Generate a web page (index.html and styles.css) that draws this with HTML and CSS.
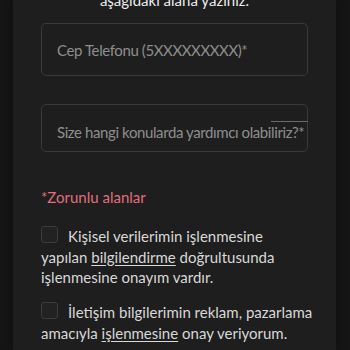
FILE: index.html
```html
<!DOCTYPE html>
<html lang="tr">
<head>
<meta charset="utf-8">
<link rel="stylesheet" href="styles.css">
</head>
<body>
<div class="panel">
  <p class="intro">aşağıdaki alana yazınız.</p>
  <div class="field field-phone"><span class="ph">Cep Telefonu (5XXXXXXXXX)*</span></div>
  <div class="field field-topic"><span class="ph nowrap">Size hangi konularda yardımcı olabiliriz?*</span><span class="notch"></span></div>
  <p class="required">*Zorunlu alanlar</p>
  <p class="consent first"><span class="box"></span>Kişisel verilerimin işlenmesine<br>yapılan <u>bilgilendirme</u> doğrultusunda<br>işlenmesine onayım vardır.</p>
  <p class="consent second"><span class="box"></span>İletişim bilgilerimin reklam, pazarlama<br>amacıyla <u>işlenmesine</u> onay veriyorum.</p>
</div>
</body>
</html>
```

FILE: styles.css
```css
html, body {
  margin: 0;
  padding: 0;
  background: #151515;
  overflow: hidden;
}
body {
  width: 350px;
  height: 350px;
  font-family: Lato, "Noto Sans", sans-serif;
}
.panel {
  margin: 0 14px 0 13px;
  padding: 0 28px;
  min-height: 350px;
  background: #1e1e1e;
  box-shadow: 0 0 10px rgba(0,0,0,0.4);
  overflow: hidden;
  color: #dcdcdc;
  font-size: 15px;
}
.intro {
  margin: -10px 0 0;
  line-height: 20px;
  text-align: center;
  color: #ececec;
}
.field {
  position: relative;
  box-sizing: border-box;
  border: 1px solid #3a3a3a;
  border-radius: 5px;
  padding-left: 15px;
  display: flex;
  align-items: center;
}
.field-phone {
  margin-top: 13px;
  height: 53px;
}
.field-topic {
  margin-top: 28px;
  height: 48px;
  padding-top: 8px;
}
.ph {
  color: #8e8e8e;
  font-size: 15px;
  line-height: 20px;
  letter-spacing: -0.4px;
}
.nowrap {
  white-space: nowrap;
}
.notch {
  position: absolute;
  top: 16px;
  right: -1px;
  width: 37px;
  height: 1px;
  background: #6a6a6a;
}
.required {
  margin: 35px 0 0;
  line-height: 20px;
  color: #e36d7b;
}
.consent {
  margin: 0 -20px 0 0;
  line-height: 20.5px;
  color: #d8d8d8;
  white-space: nowrap;
}
.consent.first { margin-top: 19px; }
.consent.second { margin-top: 14.5px; }
.consent u {
  text-underline-offset: 2px;
}
.box {
  float: left;
  box-sizing: border-box;
  width: 17px;
  height: 17px;
  margin: 0 10px 0 0;
  border: 1px solid #3b3b3b;
  border-radius: 3px;
  background: #222222;
}
```
